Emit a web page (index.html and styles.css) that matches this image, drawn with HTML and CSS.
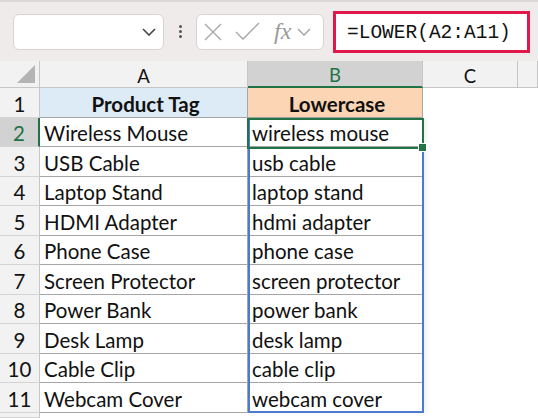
FILE: index.html
```html
<!DOCTYPE html>
<html lang="en">
<head>
    <meta charset="UTF-8">
    <title>LOWER example</title>
    <link rel="stylesheet" href="styles.css">
</head>
<body>
    <div class="toolbar">
        <div class="name-box">
            <svg class="chev" width="14" height="8" viewBox="0 0 14 8"><path d="M1 1 L7 7 L13 1" fill="none" stroke="#444" stroke-width="1.6"/></svg>
        </div>
        <div class="dots"><span></span><span></span><span></span></div>
        <div class="fx-box">
            <svg width="20" height="20" viewBox="0 0 20 20"><path d="M2 2 L18 18 M18 2 L2 18" stroke="#a8a8a8" stroke-width="1.4"/></svg>
            <svg width="25" height="19" viewBox="0 0 25 19"><path d="M1 10 L8 17 L24 1" fill="none" stroke="#a8a8a8" stroke-width="1.4"/></svg>
            <span class="fx">fx</span>
            <svg width="14" height="8" viewBox="0 0 14 8"><path d="M1 1 L7 7 L13 1" fill="none" stroke="#a0a0a0" stroke-width="1.4"/></svg>
        </div>
        <div class="formula">=LOWER(A2:A11)</div>
    </div>

    <div class="sheet">
        <div class="corner"><span class="tri"></span></div>
        <div class="col-head">A</div>
        <div class="col-head active">B</div>
        <div class="col-head">C</div>
        <div class="col-head last"></div>

        <div class="row-head">1</div>
        <div class="cell head-a">Product Tag</div>
        <div class="cell head-b">Lowercase</div>
        <div class="blank"></div><div class="blank"></div>

        <div class="row-head active">2</div>
        <div class="cell">Wireless Mouse</div>
        <div class="cell">wireless mouse</div>
        <div class="blank"></div><div class="blank"></div>

        <div class="row-head">3</div>
        <div class="cell">USB Cable</div>
        <div class="cell">usb cable</div>
        <div class="blank"></div><div class="blank"></div>

        <div class="row-head">4</div>
        <div class="cell">Laptop Stand</div>
        <div class="cell">laptop stand</div>
        <div class="blank"></div><div class="blank"></div>

        <div class="row-head">5</div>
        <div class="cell">HDMI Adapter</div>
        <div class="cell">hdmi adapter</div>
        <div class="blank"></div><div class="blank"></div>

        <div class="row-head">6</div>
        <div class="cell">Phone Case</div>
        <div class="cell">phone case</div>
        <div class="blank"></div><div class="blank"></div>

        <div class="row-head">7</div>
        <div class="cell">Screen Protector</div>
        <div class="cell">screen protector</div>
        <div class="blank"></div><div class="blank"></div>

        <div class="row-head">8</div>
        <div class="cell">Power Bank</div>
        <div class="cell">power bank</div>
        <div class="blank"></div><div class="blank"></div>

        <div class="row-head">9</div>
        <div class="cell">Desk Lamp</div>
        <div class="cell">desk lamp</div>
        <div class="blank"></div><div class="blank"></div>

        <div class="row-head">10</div>
        <div class="cell">Cable Clip</div>
        <div class="cell">cable clip</div>
        <div class="blank"></div><div class="blank"></div>

        <div class="row-head">11</div>
        <div class="cell">Webcam Cover</div>
        <div class="cell">webcam cover</div>
        <div class="blank"></div><div class="blank"></div>

        <div class="row-head"></div>
        <div class="blank"></div><div class="blank"></div><div class="blank"></div><div class="blank"></div>

        <!-- spill range and active cell -->
        <div class="spill"></div>
        <div class="active-cell"><span class="handle"></span></div>
    </div>
</body>
</html>
```

FILE: styles.css
```css
body {
    margin: 0;
    background: #fff;
    font-family: Lato, "Open Sans", sans-serif;
    width: 538px;
    height: 418px;
    overflow: hidden;
}

.toolbar {
    height: 61px;
    box-sizing: border-box;
    background: #efebeb;
    border-top: 2px solid #dcd8d8;
    display: flex;
    align-items: center;
    padding-left: 13px;
}

.name-box {
    width: 151px;
    height: 36px;
    box-sizing: border-box;
    background: #fff;
    border: 1px solid #d8d4d4;
    border-radius: 6px;
    display: flex;
    align-items: center;
    justify-content: flex-end;
    padding-right: 7px;
}

.dots {
    width: 32px;
    display: flex;
    flex-direction: column;
    align-items: center;
    gap: 2px;
}

.dots span {
    width: 3px;
    height: 3px;
    border-radius: 50%;
    background: #555;
}

.fx-box {
    width: 128px;
    height: 36px;
    box-sizing: border-box;
    background: #fff;
    border: 1px solid #d8d4d4;
    border-radius: 6px;
    display: flex;
    align-items: center;
    padding-left: 6px;
    gap: 12px;
}

.fx-box .fx {
    font-family: "Liberation Serif", serif;
    font-style: italic;
    font-size: 24px;
    color: #9a9a9a;
    margin-left: 2px;
    margin-right: -6px;
}

.formula {
    margin-left: 9px;
    width: 197px;
    height: 42px;
    box-sizing: border-box;
    border: 3px solid #e0194a;
    background: #fff;
    font-family: "Liberation Mono", monospace;
    font-size: 19.5px;
    color: #111;
    display: flex;
    align-items: center;
    padding-left: 11px;
    padding-top: 2px;
}

.sheet {
    position: relative;
    display: grid;
    grid-template-columns: 40px 208px 175px 95px 20px;
    grid-template-rows: 27px repeat(11, 29.5px) 5px;
    font-size: 20.5px;
    color: #111;
}

.corner {
    background: #f2f2f2;
    border-right: 1px solid #c6c6c6;
    border-bottom: 1px solid #c6c6c6;
    position: relative;
}

.corner .tri {
    position: absolute;
    right: 4px;
    bottom: 4px;
    width: 0;
    height: 0;
    border-left: 18px solid transparent;
    border-bottom: 18px solid #b4b4b4;
}

.col-head {
    background: #f2f2f2;
    border-right: 1px solid #c6c6c6;
    border-bottom: 1px solid #c6c6c6;
    display: flex;
    align-items: center;
    justify-content: center;
    padding-top: 3px;
    font-size: 18.5px;
}

.col-head.active {
    background: #d2d2d2;
    color: #217346;
    border-bottom: 2px solid #217346;
}

.row-head {
    background: #f2f2f2;
    border-right: 1px solid #c6c6c6;
    border-bottom: 1px solid #d4d4d4;
    display: flex;
    align-items: center;
    justify-content: center;
    padding-top: 3px;
}

.row-head.active {
    background: #d2d2d2;
    color: #217346;
    border-right: 2px solid #217346;
}

.cell {
    border-right: 1px solid #a6a6a6;
    border-bottom: 1px solid #a6a6a6;
    display: flex;
    align-items: center;
    padding: 3px 0 0 4px;
    white-space: nowrap;
    overflow: hidden;
}

.head-a {
    background: #ddebf7;
    font-weight: bold;
    justify-content: center;
}

.head-b {
    background: #fcd5b4;
    font-weight: bold;
    justify-content: center;
}

.blank {
    background: #fff;
}

.spill {
    position: absolute;
    left: 248px;
    top: 57px;
    width: 176px;
    height: 295px;
    box-sizing: border-box;
    border: 2px solid #4a7bd0;
    box-shadow: 3px 0 4px rgba(0, 0, 0, 0.06);
}

.active-cell {
    position: absolute;
    left: 247px;
    top: 57px;
    width: 177px;
    height: 31px;
    box-sizing: border-box;
    border: 2px solid #217346;
}

.handle {
    position: absolute;
    right: -5px;
    bottom: -5px;
    width: 7px;
    height: 7px;
    background: #217346;
    border: 1px solid #fff;
}
```
